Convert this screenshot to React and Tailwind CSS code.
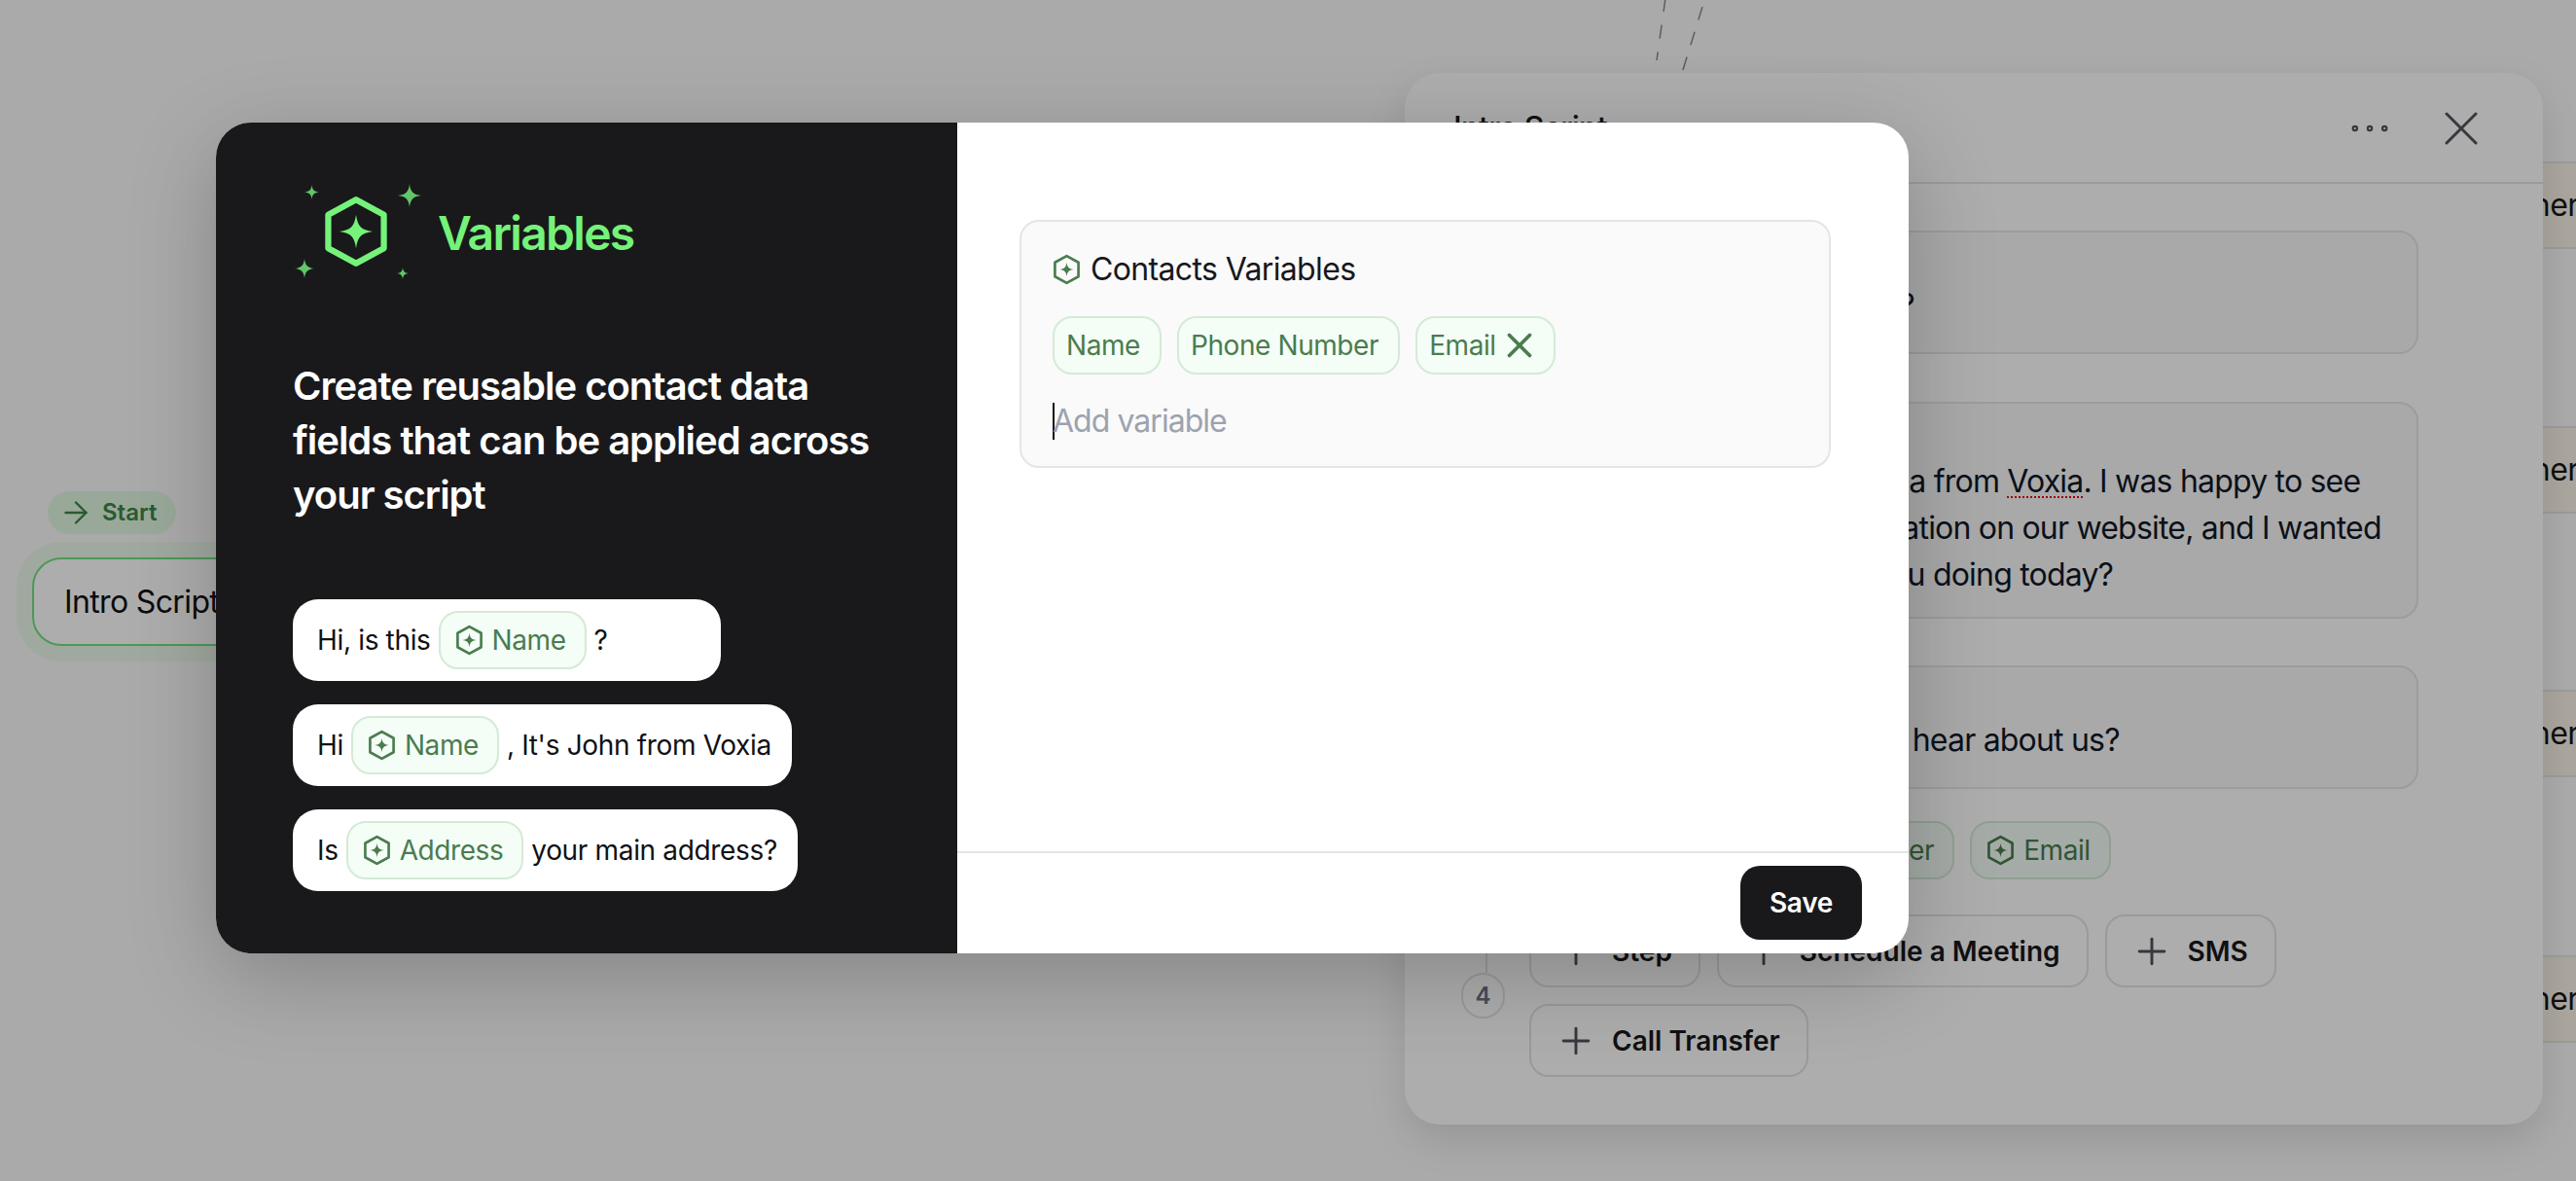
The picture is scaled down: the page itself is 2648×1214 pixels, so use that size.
import { ArrowRight, MoreHorizontal, Plus, X } from "lucide-react";

const HexIcon = ({ className }) => (
  <svg viewBox="0 0 24 28" fill="none" className={className}>
    <path d="M12 2.5 L22 8 V20 L12 25.5 L2 20 V8 Z" stroke="currentColor" strokeWidth="2.2" strokeLinejoin="round" />
    <path d="M12 8 C12.6 12.2 13.8 13.4 18 14 C13.8 14.6 12.6 15.8 12 20 C11.4 15.8 10.2 14.6 6 14 C10.2 13.4 11.4 12.2 12 8 Z" fill="currentColor" />
  </svg>
);

const Sparkle = ({ className }) => (
  <svg viewBox="0 0 24 24" className={className}>
    <path d="M12 0 C12.8 8 16 11.2 24 12 C16 12.8 12.8 16 12 24 C11.2 16 8 12.8 0 12 C8 11.2 11.2 8 12 0 Z" fill="currentColor" />
  </svg>
);

const Chip = ({ icon, children, className = "" }) => (
  <span className={`inline-flex h-[60px] items-center rounded-[20px] border-2 border-[#d5ead6] bg-[#f4fdf6] text-[28px] tracking-[-0.015em] text-[#4a7c4e] ${className}`}>
    {icon && <HexIcon className="mr-[9px] h-[34px] w-[29px] shrink-0" />}
    {children}
  </span>
);

const Bubble = ({ children, className = "" }) => (
  <div className={`flex h-[84px] items-center gap-[8px] rounded-[26px] bg-white pl-[25px] pr-[21px] text-[28px] tracking-[-0.012em] text-[#111113] ${className}`}>
    {children}
  </div>
);

const ActionButton = ({ label }) => (
  <button className="flex h-[75px] items-center gap-[15px] rounded-[20px] border-2 border-[#e4e4e7] pl-[24px] pr-[27px] text-[28px] font-semibold text-[#18181b]">
    <Plus className="h-[44px] w-[44px] text-[#52525b]" strokeWidth={1.6} />
    {label}
  </button>
);

const SideCard = ({ top }) => (
  <div
    className="absolute left-[2400px] flex h-[90px] w-[300px] items-center border-y-2 border-[#e5e5e5] bg-[#fbf5e8] pl-[144px] text-[32px] tracking-[-0.02em] whitespace-nowrap text-[#18181b]"
    style={{ top }}
  >
    Partner
  </div>
);

const Canvas = () => (
  <>
    <svg className="absolute left-[1690px] top-0 h-[80px] w-[70px] text-[#8a8a8a]" viewBox="0 0 70 80" fill="none">
      <path d="M22 -2 L13 62" stroke="currentColor" strokeWidth="1.5" strokeDasharray="14 14" />
      <path d="M60 7 L39 75" stroke="currentColor" strokeWidth="1.5" strokeDasharray="14 13" />
    </svg>

    <div className="absolute left-[49px] top-[505px] flex h-[44px] w-[132px] items-center gap-[9px] rounded-full bg-[#e2f9e2] pl-[11px] text-[24px] font-semibold text-[#3f8549]">
      <ArrowRight className="h-[36px] w-[36px]" strokeWidth={1.6} />
      Start
    </div>
    <div className="absolute left-[33px] top-[573px] flex h-[91px] w-[500px] items-center rounded-[30px] border-2 border-[#72e080] bg-white pl-[31px] text-[32px] tracking-[-0.02em] text-[#111113] ring-[16px] ring-[#ecf9ec]">
      Intro Script
    </div>

    <SideCard top={166} />
    <SideCard top={438} />
    <SideCard top={709} />
    <SideCard top={982} />

    {/* Script panel behind the dialog */}
    <div className="absolute left-[1444px] top-[75px] flex h-[1081px] w-[1170px] flex-col rounded-[36px] bg-white shadow-[0_16px_40px_rgba(0,0,0,0.12)]">
      <div className="flex h-[114px] shrink-0 items-center justify-between border-b-2 border-[#e5e5e5] pl-[50px] pr-[54px] pt-[2px]">
        <span className="text-[32px] font-medium tracking-[-0.03em] text-[#18181b]">Intro Script</span>
        <div className="flex items-center gap-[38px] text-[#52525b]">
          <MoreHorizontal className="h-[52px] w-[52px]" strokeWidth={1} />
          <X className="h-[60px] w-[60px]" strokeWidth={1.2} />
        </div>
      </div>
      <div className="relative flex flex-col pl-[128px] pr-[128px] pt-[48px]">
        <div className="absolute left-[83px] top-[781px] h-[30px] w-[2px] bg-[#e4e4e7]" />
        <div className="absolute left-[58px] top-[811px] flex h-[47px] w-[45px] items-center justify-center rounded-full border-2 border-[#e4e4e7] bg-white text-[24px] font-semibold text-[#6b7280]">
          4
        </div>
        <div className="rounded-[20px] border-2 border-[#e6e6e6] bg-[#fafafa] pb-[24px] pl-[23px] pt-[51px] text-[32px] leading-[48px] tracking-[-0.025em] text-[#111827]">
          Great, is this a good time?
        </div>
        <div className="mt-[49px] rounded-[20px] border-2 border-[#e6e6e6] bg-[#fafafa] pb-[19px] pl-[21px] pt-[56px] text-[32px] leading-[48px] tracking-[-0.025em] text-[#111827]">
          <span className="block">Hi there again, this is Olivia from <span className="underline decoration-red-600 decoration-dotted decoration-2 underline-offset-4">Voxia</span>. I was happy to see</span>
          <span className="block pl-[25px]">your very recent registration on our website, and I wanted</span>
          <span className="block pl-[54px]">just to ask how are you doing today?</span>
        </div>
        <div className="mt-[48px] rounded-[20px] border-2 border-[#e6e6e6] bg-[#fafafa] pb-[24px] pl-[50px] pt-[51px] text-[32px] leading-[48px] tracking-[-0.025em] text-[#111827]">
          And where did you first hear about us?
        </div>
        <div className="mt-[33px] flex gap-[16px]">
          <Chip icon className="pl-[15px] pr-[19px]">Name</Chip>
          <Chip icon className="pl-[15px] pr-[19px]">Phone Number</Chip>
          <Chip icon className="pl-[15px] pr-[19px]">Email</Chip>
        </div>
        <div className="mt-[36px] flex flex-wrap gap-x-[17px] gap-y-[17px]">
          <ActionButton label="Step" />
          <ActionButton label="Schedule a Meeting" />
          <ActionButton label="SMS" />
          <ActionButton label="Call Transfer" />
        </div>
      </div>
    </div>
  </>
);

const VariablesModal = () => (
  <div className="absolute left-[222px] top-[126px] flex h-[854px] w-[1740px] overflow-hidden rounded-[36px] bg-white shadow-[0_24px_90px_rgba(0,0,0,0.22)]">
    {/* Left intro column */}
    <div className="flex w-[762px] shrink-0 flex-col bg-[#19191b] pl-[79px]">
      <div className="mt-[62px] flex items-center">
        <div className="relative h-[104px] w-[136px]">
          <HexIcon className="absolute left-[30px] top-[10px] h-[80px] w-[70px] text-[#75f27a]" />
          <Sparkle className="absolute left-[12px] top-[2px] h-[15px] w-[15px] text-[#62c568]" />
          <Sparkle className="absolute left-[108px] top-[1px] h-[24px] w-[24px] text-[#62c568]" />
          <Sparkle className="absolute left-[2px] top-[78px] h-[20px] w-[20px] text-[#62c568]" />
          <Sparkle className="absolute left-[107px] top-[87px] h-[12px] w-[12px] text-[#62c568]" />
        </div>
        <h1 className="ml-[13px] text-[48px] font-semibold tracking-[-0.035em] text-[#75f27a]">Variables</h1>
      </div>
      <p className="mt-[77px] w-[640px] text-[40px] font-semibold leading-[56px] tracking-[-0.025em] text-white">
        Create reusable contact data fields that can be applied across your script
      </p>
      <div className="mt-[79px] flex flex-col gap-[24px]">
        <Bubble className="w-[440px]">
          Hi, is this
          <Chip icon className="pl-[15px] pr-[19px]">Name</Chip>
          ?
        </Bubble>
        <Bubble className="w-fit">
          Hi
          <Chip icon className="pl-[15px] pr-[19px]">Name</Chip>
          , It's John from Voxia
        </Bubble>
        <Bubble className="w-fit">
          Is
          <Chip icon className="pl-[15px] pr-[19px]">Address</Chip>
          your main address?
        </Bubble>
      </div>
    </div>

    {/* Right form column */}
    <div className="flex flex-1 flex-col">
      <div className="flex-1 pl-[64px] pr-[80px] pt-[100px]">
        <div className="h-[255px] rounded-[20px] border-2 border-[#e5e5e5] bg-[#fafafa] pl-[32px] pt-[25px]">
          <div className="flex items-center gap-[10px] text-[32px] tracking-[-0.02em] text-[#18181b]">
            <HexIcon className="h-[34px] w-[29px] text-[#4a7c4e]" />
            Contacts Variables
          </div>
          <div className="mt-[24px] flex gap-[16px]">
            <Chip className="pl-[12px] pr-[20px]">Name</Chip>
            <Chip className="pl-[12px] pr-[20px]">Phone Number</Chip>
            <Chip className="pl-[12px] pr-[14px]">
              Email
              <X className="ml-[3px] h-[42px] w-[42px]" strokeWidth={2.1} />
            </Chip>
          </div>
          <div className="mt-[29px] flex h-[38px] items-center text-[32px] tracking-[-0.03em] text-[#9ca3af]">
            <span className="h-[38px] w-[2px] bg-[#111113]" />
            <span className="-ml-[2px]">Add variable</span>
          </div>
        </div>
      </div>
      <div className="flex h-[105px] shrink-0 items-start justify-end border-t-2 border-[#e5e5e5] pr-[48px] pt-[13px]">
        <button className="h-[76px] w-[125px] rounded-[20px] bg-[#19191b] text-[28px] font-semibold tracking-[-0.01em] text-white">Save</button>
      </div>
    </div>
  </div>
);

export default function App() {
  return (
    <div className="relative h-[1214px] w-[2648px] overflow-hidden bg-[#fbfbfb] font-[family-name:Inter,sans-serif]">
      <Canvas />
      <div className="absolute inset-0 bg-black/[0.32]" />
      <VariablesModal />
    </div>
  );
}
